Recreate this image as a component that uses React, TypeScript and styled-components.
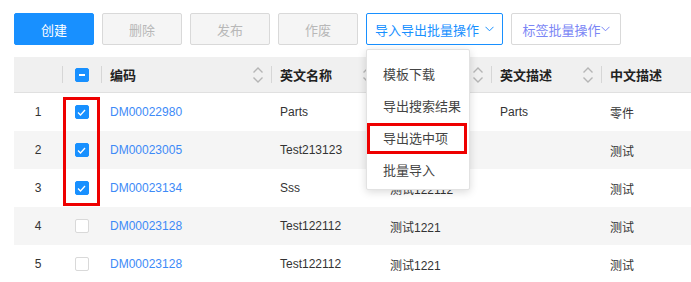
import React from "react";
import styled, { createGlobalStyle, css } from "styled-components";

const Global = createGlobalStyle`
  html, body { margin: 0; padding: 0; background: #fff; }
  body { font-family: "Liberation Sans", "Noto Sans CJK SC", Arial, sans-serif; color: #333; }
  * { box-sizing: border-box; }
`;

const Page = styled.div`
  padding: 13px 0 0 14px;
  width: 691px;
  height: 282px;
  overflow: hidden;
`;

const Toolbar = styled.div`
  display: flex;
  gap: 8px;
  height: 32px;
`;

type Variant = "primary" | "disabled" | "active" | "plain";

const Button = styled.div<{ $variant: Variant; $w: number }>`
  width: ${(p) => p.$w}px;
  height: 32px;
  border-radius: 2px;
  display: flex;
  align-items: center;
  justify-content: center;
  font-size: 13px;
  border: 1px solid #d9d9d9;
  ${(p) =>
    p.$variant === "primary" &&
    css`
      background: #1890ff;
      border-color: #1890ff;
      color: #fff;
    `}
  ${(p) =>
    p.$variant === "disabled" &&
    css`
      background: #f5f5f5;
      color: #b8b8b8;
    `}
  ${(p) =>
    p.$variant === "active" &&
    css`
      background: #fff;
      border-color: #1890ff;
      color: #1890ff;
    `}
  ${(p) =>
    p.$variant === "plain" &&
    css`
      background: #fff;
      color: #7b86f5;
    `}
`;

const DropWrap = styled.div`
  position: relative;
`;

const Chevron = styled.svg<{ $gap: number }>`
  margin-left: ${(p) => p.$gap}px;
  width: 9px;
  height: 6px;
`;

const Menu = styled.div`
  position: absolute;
  z-index: 10;
  left: 0;
  top: 36px;
  width: 104px;
  height: 141px;
  background: #fff;
  border: 1px solid #e2e2e2;
  border-radius: 2px;
  box-shadow: 0 2px 8px rgba(0, 0, 0, 0.15);
  padding-top: 7px;
`;

const MenuItem = styled.div`
  position: relative;
  height: 32px;
  display: flex;
  align-items: center;
  padding-left: 16px;
  font-size: 13px;
  color: #444;
`;

const MenuMark = styled.div`
  position: absolute;
  left: 0;
  top: 2px;
  width: 100px;
  height: 31px;
  border: 3px solid #ee0000;
`;

const Table = styled.div`
  position: relative;
  margin-top: 12px;
`;

const COLS = "48px 39px 170px 110px 110px 110px 1fr";

const HeadRow = styled.div`
  display: grid;
  grid-template-columns: ${COLS};
  height: 36px;
  background: #f0f0f0;
  border-bottom: 1px solid #e0e0e0;
`;

const HeadCell = styled.div<{ $divider?: boolean; $center?: boolean }>`
  position: relative;
  display: flex;
  align-items: center;
  justify-content: ${(p) => (p.$center ? "center" : "flex-start")};
  padding: ${(p) => (p.$center ? "0" : "0 0 0 9px")};
  font-size: 13px;
  font-weight: bold;
  color: #222;
  ${(p) =>
    p.$divider &&
    css`
      &::before {
        content: "";
        position: absolute;
        left: 0;
        top: 9px;
        height: 17px;
        width: 1px;
        background: #d6d6d6;
      }
    `}
`;

const SortIcon = styled.svg`
  position: absolute;
  right: 7px;
  top: 9px;
  width: 12px;
  height: 18px;
`;

const Row = styled.div<{ $striped: boolean }>`
  display: grid;
  grid-template-columns: ${COLS};
  height: 38px;
  background: ${(p) => (p.$striped ? "#f5f5f5" : "#fff")};
`;

const Cell = styled.div<{ $center?: boolean; $link?: boolean }>`
  display: flex;
  align-items: center;
  justify-content: ${(p) => (p.$center ? "center" : "flex-start")};
  padding-left: ${(p) => (p.$center ? "0" : "9px")};
  font-size: 12px;
  color: ${(p) => (p.$link ? "#3d8af7" : "#333")};
`;

const Box = styled.div<{ $on?: boolean }>`
  width: 14px;
  height: 14px;
  border-radius: 2px;
  display: flex;
  align-items: center;
  justify-content: center;
  background: ${(p) => (p.$on ? "#1890ff" : "#fff")};
  border: 1px solid ${(p) => (p.$on ? "#1890ff" : "#d9d9d9")};
`;

const Dash = styled.div`
  width: 6px;
  height: 2px;
  background: #fff;
`;

const CheckFrame = styled.div`
  position: absolute;
  left: 49px;
  top: 40px;
  width: 37px;
  height: 109px;
  border: 3px solid #ee0000;
`;

const ChevronDown = ({ gap }: { gap: number }) => (
  <Chevron $gap={gap} viewBox="0 0 9 6">
    <path d="M0.5 0.8 L4.5 4.8 L8.5 0.8" fill="none" stroke="currentColor" strokeWidth="1" />
  </Chevron>
);

const Sort = () => (
  <SortIcon viewBox="0 0 12 18">
    <path d="M1.5 6.5 L6 2 L10.5 6.5" fill="none" stroke="#b5b5b5" strokeWidth="1.4" />
    <path d="M1.5 11.5 L6 16 L10.5 11.5" fill="none" stroke="#b5b5b5" strokeWidth="1.4" />
  </SortIcon>
);

const Check = () => (
  <svg width="9" height="7" viewBox="0 0 9 7">
    <path d="M1 3.5 L3.5 6 L8 1" fill="none" stroke="#fff" strokeWidth="1.3" />
  </svg>
);

const rows = [
  { n: 1, code: "DM00022980", en: "Parts", cn: "", enDesc: "Parts", cnDesc: "零件", on: true },
  { n: 2, code: "DM00023005", en: "Test213123", cn: "", enDesc: "", cnDesc: "测试", on: true },
  { n: 3, code: "DM00023134", en: "Sss", cn: "测试122112", enDesc: "", cnDesc: "测试", on: true },
  { n: 4, code: "DM00023128", en: "Test122112", cn: "测试1221", enDesc: "", cnDesc: "测试", on: false },
  { n: 5, code: "DM00023128", en: "Test122112", cn: "测试1221", enDesc: "", cnDesc: "测试", on: false },
];

export default function App() {
  return (
    <Page>
      <Global />
      <Toolbar>
        <Button $variant="primary" $w={80}>创建</Button>
        <Button $variant="disabled" $w={80}>删除</Button>
        <Button $variant="disabled" $w={80}>发布</Button>
        <Button $variant="disabled" $w={80}>作废</Button>
        <DropWrap>
          <Button $variant="active" $w={137}>
            导入导出批量操作
            <ChevronDown gap={6} />
          </Button>
          <Menu>
            <MenuItem>模板下载</MenuItem>
            <MenuItem>导出搜索结果</MenuItem>
            <MenuItem>
              导出选中项
              <MenuMark />
            </MenuItem>
            <MenuItem>批量导入</MenuItem>
          </Menu>
        </DropWrap>
        <Button $variant="plain" $w={110}>
          标签批量操作
          <ChevronDown gap={0} />
        </Button>
      </Toolbar>
      <Table>
        <HeadRow>
          <HeadCell $center />
          <HeadCell $center $divider>
            <Box $on>
              <Dash />
            </Box>
          </HeadCell>
          <HeadCell $divider>
            编码
            <Sort />
          </HeadCell>
          <HeadCell $divider>
            英文名称
            <Sort />
          </HeadCell>
          <HeadCell $divider>
            中文名称
            <Sort />
          </HeadCell>
          <HeadCell $divider>
            英文描述
            <Sort />
          </HeadCell>
          <HeadCell $divider>中文描述</HeadCell>
        </HeadRow>
        {rows.map((r, i) => (
          <Row key={r.n} $striped={i % 2 === 1}>
            <Cell $center>{r.n}</Cell>
            <Cell $center>
              <Box $on={r.on}>{r.on && <Check />}</Box>
            </Cell>
            <Cell $link>{r.code}</Cell>
            <Cell>{r.en}</Cell>
            <Cell>{r.cn}</Cell>
            <Cell>{r.enDesc}</Cell>
            <Cell>{r.cnDesc}</Cell>
          </Row>
        ))}
        <CheckFrame />
      </Table>
    </Page>
  );
}
